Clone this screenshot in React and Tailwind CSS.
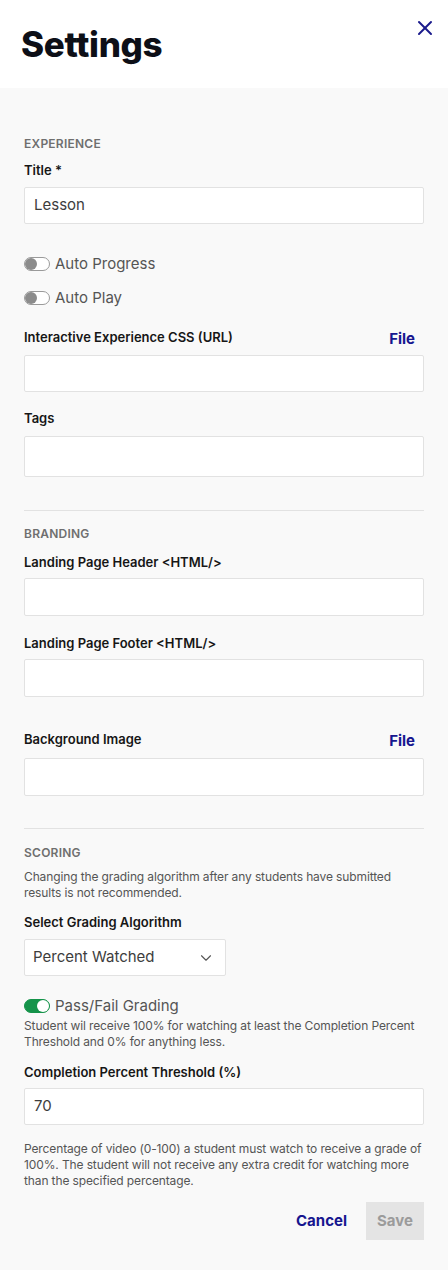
import { X, ChevronDown } from "lucide-react";

function Toggle({ on }) {
  return (
    <span
      className={
        "relative inline-block w-[26px] h-[14px] rounded-full border shrink-0 " +
        (on ? "bg-[#15934a] border-[#15934a]" : "bg-white border-[#9a9a9a]")
      }
    >
      <span
        className={
          "absolute top-[0px] w-[12px] h-[12px] rounded-full " +
          (on ? "right-[0px] bg-white" : "left-[0px] bg-[#8c8c8c]")
        }
      ></span>
    </span>
  );
}

function Label({ children, file }) {
  return (
    <div className="flex items-center justify-between h-4">
      <span className="text-[13px] leading-4 font-semibold text-[#161616]">{children}</span>
      {file && <span className="relative top-[2px] text-[15px] leading-4 font-bold text-[#16168f] pr-[9px]">File</span>}
    </div>
  );
}

function Input({ value, h = "h-[37px]" }) {
  return (
    <div className={"w-full bg-white border border-[#e2e2e2] rounded-[2px] flex items-center px-[9px] text-[15px] text-[#3d3d3d] " + h}>
      {value}
    </div>
  );
}

function Section({ children }) {
  return <div className="text-[12px] leading-4 font-semibold tracking-[0.02em] text-[#6f6f6f]">{children}</div>;
}

export default function App() {
  return (
    <div className="w-[448px] min-h-[1270px] bg-[#f9f9f9]" style={{ fontFamily: "Inter, 'Noto Sans', sans-serif" }}>
      <div className="bg-white h-[88px] flex items-start justify-between pl-[21px] pr-[11px]">
        <h1 className="mt-[24px] text-[35px] leading-[40px] font-extrabold tracking-[-0.01em] text-[#0d0f17]">Settings</h1>
        <X size={24} strokeWidth={2} className="text-[#1a1a8c] mt-[16px]" />
      </div>

      <div className="px-6 pt-[48px] pb-[29px]">
        <Section>EXPERIENCE</Section>
        <div className="mt-[10px]"><Label>Title *</Label></div>
        <div className="mt-[9px]"><Input value="Lesson" /></div>

        <div className="mt-[30px] h-5 flex items-center gap-[5px] text-[15px] text-[#555]">
          <Toggle /> Auto Progress
        </div>
        <div className="mt-[14px] h-5 flex items-center gap-[5px] text-[15px] text-[#555]">
          <Toggle /> Auto Play
        </div>

        <div className="mt-[21px]"><Label file>Interactive Experience CSS (URL)</Label></div>
        <div className="mt-[10px]"><Input /></div>

        <div className="mt-[18px]"><Label>Tags</Label></div>
        <div className="mt-[10px]"><Input h="h-[41px]" /></div>

        <div className="mt-[33px] border-t border-[#e2e2e2]"></div>

        <div className="mt-[15px]"><Section>BRANDING</Section></div>
        <div className="mt-[12px]"><Label>Landing Page Header &lt;HTML/&gt;</Label></div>
        <div className="mt-[8px]"><Input h="h-[38px]" /></div>

        <div className="mt-[19px]"><Label>Landing Page Footer &lt;HTML/&gt;</Label></div>
        <div className="mt-[8px]"><Input h="h-[38px]" /></div>

        <div className="mt-[34px]"><Label file>Background Image</Label></div>
        <div className="mt-[11px]"><Input h="h-[38px]" /></div>

        <div className="mt-[32px] border-t border-[#e2e2e2]"></div>

        <div className="mt-[16px]"><Section>SCORING</Section></div>
        <p className="mt-[8px] text-[12px] leading-4 tracking-[-0.01em] text-[#555]">
          Changing the grading algorithm after any students have submitted results is not recommended.
        </p>

        <div className="mt-[13px]"><Label>Select Grading Algorithm</Label></div>
        <div className="mt-[9px] w-[202px] h-[37px] bg-white border border-[#e2e2e2] rounded-[2px] flex items-center justify-between pl-[8px] pr-[10px] text-[15px] text-[#3d3d3d]">
          Percent Watched
          <ChevronDown size={18} strokeWidth={1.5} className="text-[#555]" />
        </div>

        <div className="mt-[20px] h-5 flex items-center gap-[5px] text-[15px] text-[#555]">
          <Toggle on /> Pass/Fail Grading
        </div>
        <p className="mt-[2px] text-[12px] leading-4 tracking-[-0.01em] text-[#555]">
          Student wil receive 100% for watching at least the Completion Percent Threshold and 0% for anything less.
        </p>

        <div className="mt-[14px]"><Label>Completion Percent Threshold (%)</Label></div>
        <div className="mt-[8px]"><Input value="70" /></div>

        <p className="mt-[16px] text-[12px] leading-4 tracking-[-0.01em] text-[#555]">
          Percentage of video (0-100) a student must watch to receive a grade of 100%. The student will not receive any extra credit for watching more than the specified percentage.
        </p>

        <div className="mt-[13px] flex justify-end items-center gap-[19px]">
          <button className="text-[15px] font-bold text-[#16168f]">Cancel</button>
          <button className="w-[58px] h-[38px] bg-[#e4e4e4] text-[15px] font-bold text-[#9b9b9b]">Save</button>
        </div>
      </div>
    </div>
  );
}
